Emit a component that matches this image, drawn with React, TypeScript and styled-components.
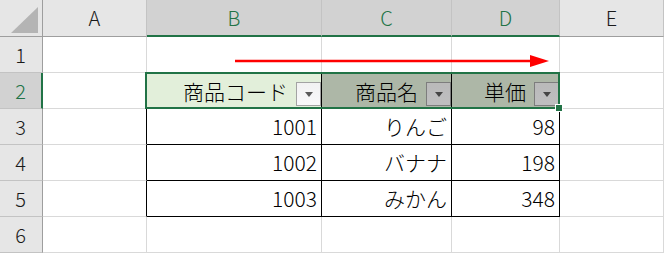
import React from 'react';
import styled, { createGlobalStyle } from 'styled-components';

const GREEN = '#217346';
const GRID = '#d9d9d9';
const INK = '#000';

const Global = createGlobalStyle`
  *, *::before, *::after { box-sizing: border-box; }
  html, body { margin: 0; padding: 0; background: #fff; }
  body { font-family: "Noto Sans CJK JP", "Noto Sans", sans-serif; }
`;

const Sheet = styled.div`
  position: relative;
  display: grid;
  grid-template-columns: 43px 104px 175px 130px 108px 104px;
  grid-template-rows: 37px repeat(6, 36px);
  width: 664px;
  height: 254px;
  overflow: hidden;
  background: #fff;
`;

const Corner = styled.div`
  display: flex;
  align-items: flex-end;
  justify-content: flex-end;
  padding: 0 2px 2px 0;
  background: #e6e6e6;
  border-right: 1px solid #9e9e9e;
  border-bottom: 1px solid #9e9e9e;
`;

const ColHead = styled.div<{ $sel?: boolean }>`
  display: flex;
  align-items: center;
  justify-content: center;
  padding-bottom: 1px;
  background: ${(p) => (p.$sel ? '#d2d2d2' : '#e6e6e6')};
  color: ${(p) => (p.$sel ? GREEN : '#1a1a1a')};
  border-right: 1px solid #c3c3c3;
  border-bottom: ${(p) => (p.$sel ? `2px solid ${GREEN}` : '1px solid #9e9e9e')};
  font-family: "Noto Sans CJK JP", "Noto Sans", sans-serif;
  font-weight: 300;
  font-size: 20px;
`;

const RowHead = styled.div<{ $sel?: boolean }>`
  display: flex;
  align-items: center;
  justify-content: center;
  background: ${(p) => (p.$sel ? '#d2d2d2' : '#e6e6e6')};
  color: ${(p) => (p.$sel ? GREEN : '#1a1a1a')};
  border-right: ${(p) => (p.$sel ? `2px solid ${GREEN}` : '1px solid #9e9e9e')};
  border-bottom: 1px solid #c3c3c3;
  padding-right: ${(p) => (p.$sel ? '0' : '1px')};
  font-family: "Noto Sans CJK JP", "Noto Sans", sans-serif;
  font-weight: 300;
  font-size: 20px;
`;

const Cell = styled.div<{ $right?: string; $bottom?: string }>`
  display: flex;
  align-items: center;
  justify-content: flex-end;
  padding: 0 4px 1px 4px;
  border-right: 1px solid ${(p) => p.$right ?? GRID};
  border-bottom: 1px solid ${(p) => p.$bottom ?? GRID};
  color: ${INK};
  font-family: "Noto Sans CJK JP", sans-serif;
  font-weight: 300;
  font-size: 21px;
  white-space: nowrap;
`;

const HeadCell = styled(Cell)<{ $shade?: boolean }>`
  position: relative;
  gap: 8px;
  padding-right: 0;
  background: #e2efda;

  &::after {
    content: '';
    display: ${(p) => (p.$shade ? 'block' : 'none')};
    position: absolute;
    inset: 0;
    background: rgba(0, 0, 0, 0.23);
    pointer-events: none;
  }
`;

const Label = styled.span`
  padding-top: 1px;
`;

const FilterButton = styled.span`
  align-self: flex-end;
  margin-bottom: 1px;
  display: flex;
  align-items: center;
  justify-content: center;
  width: 25px;
  height: 24px;
  border: 1px solid #a3a3a3;
  background: linear-gradient(#f2f2f2, #f8f8fa);

  &::before {
    content: '';
    width: 0;
    height: 0;
    margin-top: 1px;
    border-left: 4px solid transparent;
    border-right: 4px solid transparent;
    border-top: 5px solid #5a5a5a;
  }
`;

/* red arrow drawn across row 1, over columns B–D */
const Arrow = styled.svg`
  position: absolute;
  left: 147px;
  top: 37px;
  pointer-events: none;
`;

/* active selection frame around B2:D2 */
const Selection = styled.div`
  position: absolute;
  left: 145px;
  top: 72px;
  width: 415px;
  height: 37px;
  border: 2px solid ${GREEN};
  pointer-events: none;
`;

const FillHandle = styled.span`
  position: absolute;
  right: -5px;
  bottom: -5px;
  width: 8px;
  height: 8px;
  background: ${GREEN};
  border: 1px solid #fff;
`;

type Row = { code: string; name: string; price: string };

const rows: Row[] = [
  { code: '1001', name: 'りんご', price: '98' },
  { code: '1002', name: 'バナナ', price: '198' },
  { code: '1003', name: 'みかん', price: '348' },
];

const letters = ['A', 'B', 'C', 'D', 'E'];

export default function App() {
  return (
    <>
      <Global />
      <Sheet>
        <Corner>
          <svg width="30" height="28" viewBox="0 0 30 28">
            <polygon points="1,27 28,27 28,1" fill="#b4b4b4" />
          </svg>
        </Corner>
        {letters.map((l) => (
          <ColHead key={l} $sel={l === 'B' || l === 'C' || l === 'D'}>
            {l}
          </ColHead>
        ))}

        <RowHead>1</RowHead>
        <Cell />
        <Cell />
        <Cell />
        <Cell />
        <Cell />

        <RowHead $sel>2</RowHead>
        <Cell />
        <HeadCell $right={INK}>
          <Label>商品コード</Label>
          <FilterButton />
        </HeadCell>
        <HeadCell $right={INK} $shade>
          <Label>商品名</Label>
          <FilterButton />
        </HeadCell>
        <HeadCell $right={INK} $shade>
          <Label>単価</Label>
          <FilterButton />
        </HeadCell>
        <Cell />

        {rows.map((r, i) => (
          <React.Fragment key={r.code}>
            <RowHead>{i + 3}</RowHead>
            <Cell $right={INK} />
            <Cell $right={INK} $bottom={INK}>{r.code}</Cell>
            <Cell $right={INK} $bottom={INK}>{r.name}</Cell>
            <Cell $right={INK} $bottom={INK}>{r.price}</Cell>
            <Cell />
          </React.Fragment>
        ))}

        <RowHead>6</RowHead>
        <Cell />
        <Cell />
        <Cell />
        <Cell />
        <Cell />

        <Arrow width="413" height="36" viewBox="0 0 413 36">
          <line x1="88" y1="24" x2="386" y2="24" stroke="#ff0000" strokeWidth="2.6" />
          <polygon points="383,18 402,24 383,30" fill="#ff0000" />
        </Arrow>

        <Selection>
          <FillHandle />
        </Selection>
      </Sheet>
    </>
  );
}
